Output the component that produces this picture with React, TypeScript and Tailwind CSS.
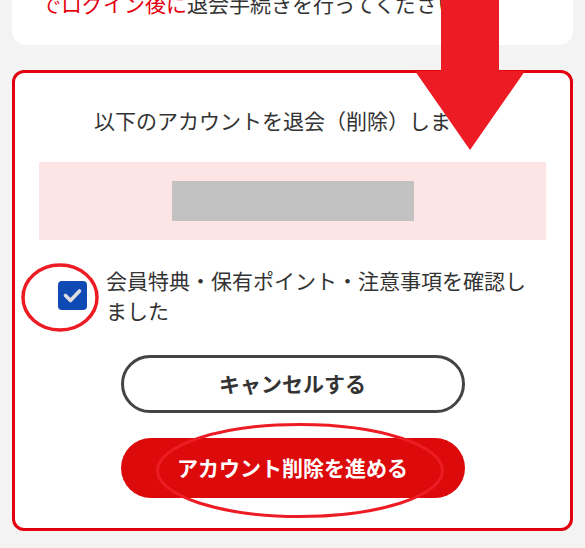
import React from "react";

export default function App() {
  return (
    <div className="relative min-h-[548px] overflow-hidden bg-[#f3f3f3] px-3 font-['Noto_Sans_CJK_JP','Noto_Sans',sans-serif]">
      <div className="-mt-[42px] rounded-[14px] bg-white pb-[27px] pl-[28px] pr-4 pt-[30px] text-[21px] leading-[30px] text-[#333]">
        <p className="overflow-hidden whitespace-nowrap">
          <span className="text-[#e60012]">でログイン後に</span>退会手続きを行ってください。
        </p>
      </div>

      <div className="mt-[25px] rounded-[12px] border-[3px] border-[#e20010] bg-white pb-[30px] pt-[32px]">
        <p className="text-center text-[21px] leading-[30px] text-[#333]">
          以下のアカウントを退会（削除）します。
        </p>

        <div className="mx-6 mt-[27px] flex h-[78px] items-center justify-center bg-[#fde5e5]">
          <div className="h-[40px] w-[242px] bg-[#c2c2c2]" />
        </div>

        <label className="mt-[25px] flex items-center gap-[19px] pl-[43px] pr-[30px]">
          <span className="flex h-[29px] w-[29px] shrink-0 items-center justify-center rounded-[4px] bg-[#0f4ab4]">
            <svg width="29" height="29" viewBox="0 0 29 29">
              <polyline
                points="7.5,14.5 12.5,19.5 21.5,10"
                fill="none"
                stroke="#dedede"
                strokeWidth="3.6"
                strokeLinecap="round"
                strokeLinejoin="round"
              />
            </svg>
          </span>
          <span className="text-[21px] leading-[30px] text-[#333]">
            会員特典・保有ポイント・注意事項を確認しました
          </span>
        </label>

        <div className="mt-[30px] flex flex-col items-center gap-[25px]">
          <button className="flex h-[58px] w-[344px] items-center justify-center rounded-full border-[3px] border-[#444] bg-white text-[21px] font-bold text-[#333]">
            キャンセルする
          </button>
          <button className="flex h-[60px] w-[344px] items-center justify-center rounded-full bg-[#dc0a0a] text-[21px] font-bold text-white">
            アカウント削除を進める
          </button>
        </div>
      </div>

      <svg
        className="pointer-events-none absolute left-0 top-0"
        width="585"
        height="548"
        viewBox="0 0 585 548"
      >
        <polygon
          points="441,0 499,0 499,71 525,71 470,150 415,71 441,71"
          fill="#ed1c24"
        />
        <ellipse cx="60" cy="297.5" rx="37" ry="32.5" fill="none" stroke="#ed1c24" strokeWidth="3.5" />
        <ellipse cx="300" cy="470.5" rx="142.5" ry="46" fill="none" stroke="#ed1c24" strokeWidth="3" />
      </svg>
    </div>
  );
}
